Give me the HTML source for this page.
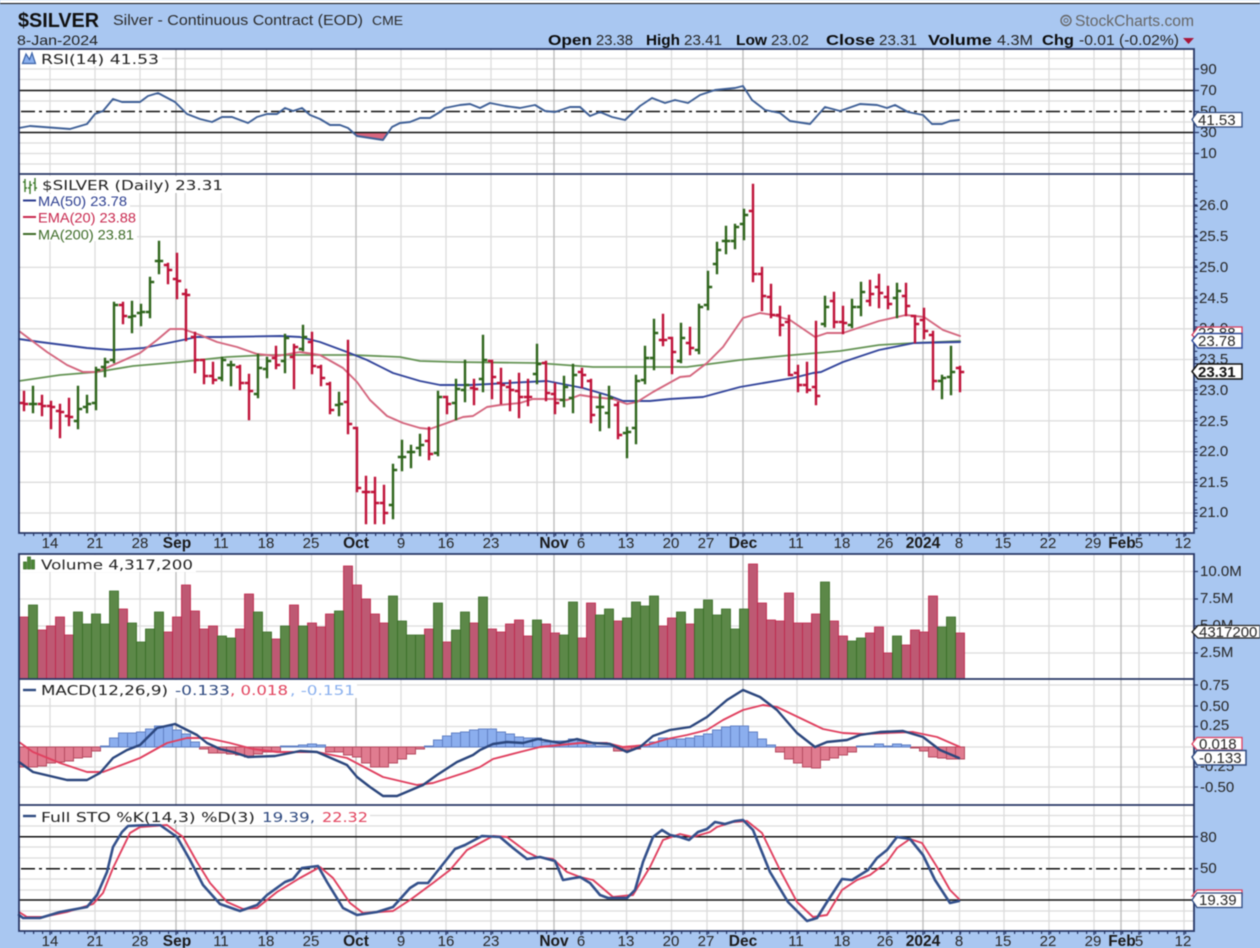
<!DOCTYPE html>
<html><head><meta charset="utf-8"><title>$SILVER</title>
<style>
html,body{margin:0;padding:0;background:#a9c7f1;width:1260px;height:948px;overflow:hidden}
svg{display:block;filter:blur(.4px)}
text{font-family:"Liberation Sans",Arial,sans-serif;fill:#222;font-size:14px}
.ax{font-size:15px;fill:#262626}
.dt{font-size:15px;text-anchor:middle;fill:#262626}
.mo{font-size:15.5px;font-weight:bold;text-anchor:middle;fill:#1a1a1a}
.b{font-weight:bold;font-size:15px;fill:#0c0c0c}
.v{font-size:15px;fill:#262626}
.l{font-family:"DejaVu Sans","Liberation Sans",sans-serif;font-size:13px}
.g{stroke:#dcdcdc;stroke-width:1.3;fill:none}
.gd{stroke:#bdbdbd;stroke-width:1.4;fill:none}
.f{fill:none;stroke-linejoin:round;stroke-linecap:round}
</style></head><body>
<svg xmlns="http://www.w3.org/2000/svg" width="1260" height="948" viewBox="0 0 1260 948">
<rect width="1260" height="948" fill="#a9c7f1"/>
<rect width="1260" height="3" fill="#fff"/><rect y="3" width="1260" height="1" fill="#111"/>
<!-- panels -->
<rect x="19" y="49" width="1175" height="484" fill="#fff"/>
<rect x="19" y="554" width="1175" height="377" fill="#fff"/>
<!-- horizontal grid -->
<path class="g" d="M19 58.5H1194M19 69H1194M19 79.5H1194M19 101H1194M19 122H1194M19 143H1194M19 153.5H1194M19 164H1194
M19 206H1194M19 236.7H1194M19 267.4H1194M19 298.1H1194M19 328.8H1194M19 359.5H1194M19 390.2H1194M19 420.9H1194M19 451.6H1194M19 482.3H1194M19 513H1194
M19 571.5H1194M19 599H1194M19 626H1194M19 653H1194
M19 685H1194M19 706H1194M19 726.5H1194M19 747H1194M19 767H1194M19 787H1194
M19 815.5H1194M19 826H1194M19 847H1194M19 858H1194M19 879H1194M19 890H1194M19 911H1194M19 921H1194"/>
<!-- vertical grid -->
<path class="g" d="M50 49V533M95 49V533M140 49V533M185 49V533M221.5 49V533M266.5 49V533M311.5 49V533M401 49V533M446 49V533M491 49V533M537 49V533M581 49V533M626.5 49V533M671.5 49V533M707 49V533M797 49V533M842 49V533M887 49V533M959.5 49V533M1004 49V533M1049 49V533M1094 49V533M1139 49V533M1184 49V533
M50 554V931M95 554V931M140 554V931M185 554V931M221.5 554V931M266.5 554V931M311.5 554V931M401 554V931M446 554V931M491 554V931M537 554V931M581 554V931M626.5 554V931M671.5 554V931M707 554V931M797 554V931M842 554V931M887 554V931M959.5 554V931M1004 554V931M1049 554V931M1094 554V931M1139 554V931M1184 554V931"/>
<path class="gd" d="M176 49V533M356 49V533M554 49V533M743 49V533M923 49V533M1121 49V533M176 554V931M356 554V931M554 554V931M743 554V931M923 554V931M1121 554V931"/>

<!-- RSI -->
<path d="M353 132.5L357 136L370 138L383 140L387 132.5Z" fill="#d9677f" stroke="none"/>
<path d="M19 90.5H1194M19 132.5H1194" stroke="#111" stroke-width="1.5" fill="none"/>
<path d="M21 111.5H1194" stroke="#111" stroke-width="1.5" stroke-dasharray="14 4 3 4" fill="none"/>
<polyline class="f" stroke="#3f6097" stroke-width="1.9" points="19,128 30,126 70,129 87,124 95,114 103,111 113,99 122,102 140,102 148,96 158,93 175,102 187,114 200,119 212,122 222,117 232,117 248,123 257,117 267,114 277,114 285,108 293,111 302,108 310,115 320,119 330,125 340,125 348,128 357,136 370,138 383,140 392,127 400,123 410,122 420,118 430,118 440,112 445,108 460,105 470,104 480,108 490,103 505,106 520,108 535,105 545,111 555,112 570,107 580,107 590,116 600,112 612,117 625,120 640,106 652,98 665,103 675,100 688,103 700,95 715,90 735,88 743,86 752,100 765,110 780,113 790,121 810,124 825,107 840,111 860,104 877,105 887,108 895,105 908,112 923,115 932,124 942,124 950,121 959,120"/>

<!-- price MAs -->
<polyline class="f" stroke="#659455" stroke-width="1.8" points="19,381 60,375 97,372 133,366 180,362 227,357 267,355 353,355 400,357 420,361 453,362 537,363 593,367 647,367 687,367 740,360 793,355 840,351 879,345 914,343 960,341"/>
<polyline class="f" stroke="#34469c" stroke-width="1.9" points="19,339 40,342 87,348 113,350 143,348 173,342 197,337 220,337 280,336 300,337 320,342 347,352 367,360 393,373 420,381 440,385 470,385 547,381 583,388 607,395 623,401 650,401 670,399 703,397 740,387 793,378 813,373 821,372 843,362 879,350 914,343 960,342"/>
<polyline class="f" stroke="#d4667e" stroke-width="1.9" points="19,331 47,352 67,365 83,372 97,372 113,365 140,353 157,340 170,329 183,329 200,335 217,342 237,347 257,354 277,356 300,352 320,355 343,368 357,382 370,400 387,416 403,423 420,428 430,429 447,423 463,417 473,416 487,407 500,405 520,403 533,399 553,399 567,400 580,395 593,397 613,399 627,404 637,402 653,392 680,377 690,376 707,363 723,347 743,318 760,313 773,315 790,320 815,337 827,333 843,333 879,321 906,315 924,317 943,330 960,336"/>
<!-- OHLC red -->
<path fill="none" stroke="#bf1239" stroke-width="2.4" stroke-linecap="square" d="M24 392V410M21 403H24M24 404H27M42 396V415M39 404H42M42 406H45M51 402V428M48 406H51M51 407H54M60 405V437M57 411H60M60 412H63M69 399V425M66 416H69M69 417H72M123 303V323M120 305H123M123 316H126M168 264V283M165 265H168M168 270H171M177 254V298M174 279H177M177 281H180M186 290V340M183 294H186M186 295H189M195 333V372M192 337H195M195 360H198M204 360V383M201 360H204M204 376H207M213 363V383M210 376H213M213 380H216M240 366V389M237 367H240M240 383H243M249 375V419M246 383H249M249 391H252M276 347V368M273 358H276M276 365H279M294 345V388M291 357H294M294 347H297M312 333V373M309 342H312M312 366H315M321 366V385M318 367H321M321 378H324M330 383V413M327 384H330M330 410H333M348 341V433M345 402H348M348 424H351M357 428V491M354 428H357M357 488H360M366 477V523M363 492H369M375 478V523M372 492H375M375 503H378M384 486V523M381 503H384M384 513H387M429 428V459M426 441H429M429 454H432M447 397V413M444 397H447M447 404H450M474 380V404M471 388H474M474 389H477M492 361V398M489 361H492M492 377H495M501 369V403M498 383H501M501 385H504M510 381V410M507 387H510M510 390H513M519 374V417M516 391H519M519 397H522M528 380V405M525 397H531M546 362V400M543 363H546M546 393H549M555 384V413M552 394H555M555 403H558M582 369V387M579 372H582M582 375H585M591 380V422M588 381H591M591 415H594M618 403V438M615 405H618M618 435H621M663 315V345M660 340H666M672 338V373M669 338H672M672 352H675M690 328V354M687 343H690M690 348H693M753 185V281M750 211H753M753 274H756M762 268V310M759 274H762M762 296H765M771 285V317M768 297H771M771 315H774M780 307V335M777 315H780M780 325H783M789 316V375M786 322H789M789 375H792M798 366V391M795 373H798M798 385H801M807 363V392M804 385H807M807 390H810M816 322V404M813 387H816M816 396H819M834 293V327M831 301H834M834 322H837M843 307V333M840 322H843M843 323H846M870 281V305M867 301H870M870 294H873M879 275V307M876 287H879M879 293H882M888 287V308M885 297H888M888 304H891M906 284V315M903 296H906M906 306H909M915 316V342M912 316H915M915 324H918M924 309V338M921 320H924M924 331H927M933 332V389M930 335H933M933 381H936M960 367V391M957 368H960M960 372H963"/>
<!-- OHLC green -->
<path fill="none" stroke="#2f651c" stroke-width="2.4" stroke-linecap="square" d="M33 387V412M30 404H36M78 387V428M75 421H78M78 409H81M87 396V412M84 407H87M87 404H90M96 368V409M93 403H96M96 370H99M105 359V376M102 367H105M105 362H108M114 303V362M111 360H114M114 305H117M132 302V332M129 317H132M132 316H135M141 305V325M138 313H141M141 312H144M150 278V317M147 312H150M150 282H153M159 242V273M156 261H162M222 358V380M219 378H222M222 360H225M231 362V385M228 365H234M258 355V397M255 394H258M258 368H261M267 358V377M264 369H267M267 361H270M285 335V372M282 361H285M285 338H288M303 326V350M300 349H303M303 337H306M339 393V415M336 405H339M339 404H342M393 465V518M390 505H393M393 470H396M402 441V470M399 457H405M411 446V467M408 452H414M420 435V455M417 448H420M420 445H423M438 392V455M435 453H438M438 397H441M456 380V419M453 403H456M456 389H459M465 361V401M462 390H465M465 385H468M483 336V391M480 379H483M483 360H486M537 345V383M534 374H537M537 364H540M564 377V406M561 400H564M564 387H567M573 365V412M570 398H573M573 375H576M600 395V430M597 407H603M609 387V427M606 413H609M609 398H612M627 428V457M624 433H627M627 432H630M636 376V443M633 428H636M636 381H639M645 347V383M642 380H645M645 358H648M654 320V369M651 358H654M654 333H657M681 324V362M678 361H681M681 338H684M699 305V353M696 350H699M699 307H702M708 272V309M705 305H708M708 287H711M717 243V273M714 264H717M717 250H720M726 227V253M723 241H729M735 225V248M732 241H735M735 227H738M744 210V239M741 224H744M744 215H747M825 297V326M822 324H825M825 307H828M852 300V327M849 325H852M852 307H855M861 283V315M858 307H861M861 292H864M897 284V317M894 298H897M897 291H900M942 376V398M939 381H942M942 378H945M951 347V394M948 377H951M951 372H954"/>

<!-- Volume -->
<path fill="#bd5670" fill-opacity=".98" stroke="#bf1f45" stroke-width=".8" d="M19.5 617h9V679h-9zM37.5 630h9V679h-9zM46.5 626h9V679h-9zM55.5 617h9V679h-9zM64.5 635h9V679h-9zM118.5 609h9V679h-9zM163.5 632h9V679h-9zM172.5 617h9V679h-9zM181.5 585h9V679h-9zM190.5 611h9V679h-9zM199.5 629h9V679h-9zM208.5 626h9V679h-9zM235.5 629h9V679h-9zM244.5 594h9V679h-9zM271.5 639h9V679h-9zM289.5 605h9V679h-9zM307.5 623h9V679h-9zM316.5 627h9V679h-9zM325.5 614h9V679h-9zM343.5 566h9V679h-9zM352.5 585h9V679h-9zM361.5 599h9V679h-9zM370.5 614h9V679h-9zM379.5 623h9V679h-9zM424.5 629h9V679h-9zM442.5 642h9V679h-9zM469.5 623h9V679h-9zM487.5 629h9V679h-9zM496.5 632h9V679h-9zM505.5 624h9V679h-9zM514.5 620h9V679h-9zM523.5 636h9V679h-9zM541.5 624h9V679h-9zM550.5 633h9V679h-9zM577.5 638h9V679h-9zM586.5 603h9V679h-9zM613.5 621h9V679h-9zM658.5 626h9V679h-9zM667.5 618h9V679h-9zM685.5 624h9V679h-9zM748.5 564h9V679h-9zM757.5 603h9V679h-9zM766.5 620h9V679h-9zM775.5 621h9V679h-9zM784.5 593h9V679h-9zM793.5 623h9V679h-9zM802.5 623h9V679h-9zM811.5 614h9V679h-9zM829.5 621h9V679h-9zM838.5 636h9V679h-9zM865.5 633h9V679h-9zM874.5 627h9V679h-9zM883.5 653h9V679h-9zM901.5 645h9V679h-9zM910.5 630h9V679h-9zM919.5 632h9V679h-9zM928.5 596h9V679h-9zM955.5 633h9V679h-9z"/>
<path fill="#5c8848" stroke="#356a22" stroke-width=".8" d="M28.5 605h9V679h-9zM73.5 612h9V679h-9zM82.5 624h9V679h-9zM91.5 614h9V679h-9zM100.5 624h9V679h-9zM109.5 591h9V679h-9zM127.5 623h9V679h-9zM136.5 642h9V679h-9zM145.5 629h9V679h-9zM154.5 612h9V679h-9zM217.5 636h9V679h-9zM226.5 638h9V679h-9zM253.5 612h9V679h-9zM262.5 632h9V679h-9zM280.5 626h9V679h-9zM298.5 626h9V679h-9zM334.5 611h9V679h-9zM388.5 596h9V679h-9zM397.5 621h9V679h-9zM406.5 635h9V679h-9zM415.5 635h9V679h-9zM433.5 603h9V679h-9zM451.5 630h9V679h-9zM460.5 612h9V679h-9zM478.5 597h9V679h-9zM532.5 620h9V679h-9zM559.5 635h9V679h-9zM568.5 602h9V679h-9zM595.5 615h9V679h-9zM604.5 609h9V679h-9zM622.5 618h9V679h-9zM631.5 602h9V679h-9zM640.5 606h9V679h-9zM649.5 596h9V679h-9zM676.5 612h9V679h-9zM694.5 609h9V679h-9zM703.5 600h9V679h-9zM712.5 615h9V679h-9zM721.5 609h9V679h-9zM730.5 629h9V679h-9zM739.5 609h9V679h-9zM820.5 582h9V679h-9zM847.5 641h9V679h-9zM856.5 638h9V679h-9zM892.5 636h9V679h-9zM937.5 627h9V679h-9zM946.5 617h9V679h-9z"/>

<!-- MACD histogram -->
<path fill="#e07c90" stroke="#b54a60" stroke-width="1" d="M19.5 747h9V767h-9zM28.5 747h9V767h-9zM37.5 747h9V766h-9zM46.5 747h9V763h-9zM55.5 747h9V762h-9zM64.5 747h9V761h-9zM73.5 747h9V758h-9zM82.5 747h9V757h-9zM91.5 747h9V751h-9zM199.5 747h9V749h-9zM208.5 747h9V753h-9zM217.5 747h9V753h-9zM226.5 747h9V754h-9zM235.5 747h9V755h-9zM244.5 747h9V757h-9zM253.5 747h9V754h-9zM262.5 747h9V752h-9zM271.5 747h9V752h-9zM325.5 747h9V752h-9zM334.5 747h9V752h-9zM343.5 747h9V755h-9zM352.5 747h9V757h-9zM361.5 747h9V763h-9zM370.5 747h9V767h-9zM379.5 747h9V767h-9zM388.5 747h9V763h-9zM397.5 747h9V759h-9zM406.5 747h9V754h-9zM415.5 747h9V749h-9zM613.5 747h9V751h-9zM622.5 747h9V750h-9zM631.5 747h9V749h-9zM775.5 747h9V752h-9zM784.5 747h9V759h-9zM793.5 747h9V763h-9zM802.5 747h9V767h-9zM811.5 747h9V768h-9zM820.5 747h9V760h-9zM829.5 747h9V758h-9zM838.5 747h9V755h-9zM847.5 747h9V752h-9zM910.5 747h9V748h-9zM919.5 747h9V751h-9zM928.5 747h9V757h-9zM937.5 747h9V758h-9zM946.5 747h9V759h-9zM955.5 747h9V759h-9z"/>
<path fill="#8baeee" stroke="#6080c4" stroke-width="1" d="M100.5 746h9V747h-9zM109.5 738h9V747h-9zM118.5 733h9V747h-9zM127.5 733h9V747h-9zM136.5 732h9V747h-9zM145.5 729h9V747h-9zM154.5 726h9V747h-9zM163.5 726h9V747h-9zM172.5 730h9V747h-9zM181.5 734h9V747h-9zM190.5 742h9V747h-9zM280.5 746h9V747h-9zM289.5 746h9V747h-9zM298.5 745h9V747h-9zM307.5 744h9V747h-9zM316.5 745h9V747h-9zM424.5 746h9V747h-9zM433.5 740h9V747h-9zM442.5 736h9V747h-9zM451.5 733h9V747h-9zM460.5 732h9V747h-9zM469.5 730h9V747h-9zM478.5 729h9V747h-9zM487.5 729h9V747h-9zM496.5 732h9V747h-9zM505.5 734h9V747h-9zM514.5 737h9V747h-9zM523.5 738h9V747h-9zM532.5 738h9V747h-9zM541.5 742h9V747h-9zM550.5 741h9V747h-9zM559.5 741h9V747h-9zM568.5 739h9V747h-9zM577.5 741h9V747h-9zM586.5 745h9V747h-9zM595.5 746h9V747h-9zM604.5 746h9V747h-9zM640.5 745h9V747h-9zM649.5 742h9V747h-9zM658.5 738h9V747h-9zM667.5 739h9V747h-9zM676.5 739h9V747h-9zM685.5 738h9V747h-9zM694.5 736h9V747h-9zM703.5 734h9V747h-9zM712.5 730h9V747h-9zM721.5 727h9V747h-9zM730.5 726h9V747h-9zM739.5 726h9V747h-9zM748.5 732h9V747h-9zM757.5 739h9V747h-9zM766.5 745h9V747h-9zM856.5 746h9V747h-9zM865.5 746h9V747h-9zM874.5 744h9V747h-9zM883.5 746h9V747h-9zM892.5 744h9V747h-9zM901.5 745h9V747h-9z"/>
<polyline class="f" stroke="#e0405f" stroke-width="1.9" points="19,742 33,752 60,763 87,772 103,772 140,758 167,743 187,738 207,738 230,743 253,749 277,752 317,752 347,758 383,777 417,785 433,783 467,772 480,767 493,759 520,752 540,747 560,745 580,743 607,743 623,747 647,745 667,739 687,735 707,730 723,720 743,710 763,705 777,707 800,718 823,729 843,733 863,734 887,733 913,732 937,737 960,747"/>
<polyline class="f" stroke="#2b467d" stroke-width="2.4" points="19,762 33,772 67,780 87,780 100,773 113,758 127,750 140,745 157,728 175,724 197,735 207,743 220,749 233,752 248,757 275,756 300,751 317,752 347,765 357,777 370,787 383,796 397,796 423,785 437,775 457,762 473,755 480,750 493,744 507,742 523,743 538,739 560,743 577,739 593,743 610,744 627,752 640,747 653,736 670,730 690,727 707,717 727,700 743,690 760,697 777,710 797,733 815,747 827,742 847,740 860,735 880,732 903,731 923,737 940,750 959,758"/>

<!-- STO -->
<path d="M19 836.7H1194M19 900H1194" stroke="#111" stroke-width="1.5" fill="none"/>
<path d="M21 868.7H1194" stroke="#111" stroke-width="1.5" stroke-dasharray="14 4 3 4" fill="none"/>
<polyline class="f" stroke="#e0405f" stroke-width="1.9" points="19,912 27,917 43,917 67,912 93,904 103,893 113,868 130,833 140,827 167,825 183,837 197,862 210,883 227,902 243,909 257,908 277,892 300,878 320,867 333,878 350,903 363,913 393,911 410,900 433,883 450,870 467,850 480,843 493,836 507,837 527,852 537,857 553,859 567,872 580,877 593,880 613,897 633,895 650,867 663,840 680,834 693,837 710,832 717,827 733,822 747,821 762,833 780,870 797,902 813,917 827,915 842,890 857,880 870,875 887,862 897,848 910,839 922,843 937,867 950,890 959,899"/>
<polyline class="f" stroke="#33508b" stroke-width="2.6" points="19,915 23,918 40,918 60,912 87,907 97,895 107,872 113,847 122,832 128,826 147,825 160,825 177,837 190,860 203,885 220,904 240,911 257,905 267,895 285,882 293,879 302,868 318,866 327,882 343,908 357,915 377,912 393,907 410,888 418,883 428,883 455,849 465,845 482,836 500,837 513,848 527,859 540,857 555,861 563,880 580,877 590,883 600,895 608,898 627,898 635,890 643,862 653,837 662,830 670,835 680,837 689,840 698,832 707,829 715,822 725,824 735,821 743,820 753,830 770,872 788,902 807,921 817,918 827,902 842,879 852,880 868,870 877,858 887,850 897,837 910,839 923,855 935,880 950,903 959,901"/>

<!-- frame lines -->
<path d="M19 49V533H1194V49H19ZM19 174H1194M19 554V931H1194V554H19ZM19 679H1194M19 805H1194" fill="none" stroke="#283766" stroke-width="1.8"/>
<!-- ticks -->
<path d="M24 534.5H1190" stroke="#283766" stroke-width="3" stroke-dasharray="1.2 7.8" fill="none"/>
<path d="M24 932.5H1190" stroke="#283766" stroke-width="3" stroke-dasharray="1.2 7.8" fill="none"/>
<path d="M50 533v4M95 533v4M140 533v4M176 533v4M221.5 533v4M266.5 533v4M311.5 533v4M356 533v4M401 533v4M446 533v4M491 533v4M554 533v4M581 533v4M626.5 533v4M671.5 533v4M707 533v4M743 533v4M797 533v4M842 533v4M887 533v4M923 533v4M960 533v4M1004 533v4M1049 533v4M1094 533v4M1121 533v4M1139 533v4M1184 533v4
M50 931v4M95 931v4M140 931v4M176 931v4M221.5 931v4M266.5 931v4M311.5 931v4M356 931v4M401 931v4M446 931v4M491 931v4M554 931v4M581 931v4M626.5 931v4M671.5 931v4M707 931v4M743 931v4M797 931v4M842 931v4M887 931v4M923 931v4M960 931v4M1004 931v4M1049 931v4M1094 931v4M1121 931v4M1139 931v4M1184 931v4" stroke="#283766" stroke-width="1.3" fill="none"/>
<path d="M1196 180V533" stroke="#283766" stroke-width="2.5" stroke-dasharray="1.2 4.9" fill="none"/>
<path d="M1194 69h5M1194 90.5h5M1194 111.5h5M1194 132.5h5M1194 153.5h5M1194 206h4M1194 236.7h4M1194 267.4h4M1194 298.1h4M1194 328.8h4M1194 359.5h4M1194 390.2h4M1194 420.9h4M1194 451.6h4M1194 482.3h4M1194 513h4M1194 571.5h4M1194 599h4M1194 626h4M1194 653h4M1194 685h4M1194 706h4M1194 726.5h4M1194 767h4M1194 787h4M1194 836.7h4M1194 868.7h4" stroke="#283766" stroke-width="1.3" fill="none"/>

<!-- header -->
<text x="18" y="27" style="font-size:20px;font-weight:bold;fill:#111" textLength="81" lengthAdjust="spacingAndGlyphs">$SILVER</text>
<text x="113" y="25" style="font-size:15px;fill:#2b2b2b" textLength="250" lengthAdjust="spacingAndGlyphs">Silver - Continuous Contract (EOD)</text>
<text x="372" y="25" style="font-size:13px;fill:#2b2b2b" textLength="31" lengthAdjust="spacingAndGlyphs">CME</text>
<text x="17" y="45" style="font-size:14px;fill:#222" textLength="81" lengthAdjust="spacingAndGlyphs">8-Jan-2024</text>
<circle cx="1066" cy="20.5" r="5" fill="none" stroke="#666" stroke-width="1.4"/><circle cx="1066" cy="20.5" r="2" fill="none" stroke="#666" stroke-width="1"/>
<text x="1075" y="26" style="font-size:15.5px;fill:#666" textLength="119" lengthAdjust="spacingAndGlyphs">StockCharts.com</text>
<text x="548" y="45" class="b" textLength="44" lengthAdjust="spacingAndGlyphs">Open</text><text x="596" y="45" class="v" textLength="37" lengthAdjust="spacingAndGlyphs">23.38</text>
<text x="646" y="45" class="b" textLength="34" lengthAdjust="spacingAndGlyphs">High</text><text x="684" y="45" class="v" textLength="38" lengthAdjust="spacingAndGlyphs">23.41</text>
<text x="736" y="45" class="b" textLength="31" lengthAdjust="spacingAndGlyphs">Low</text><text x="771" y="45" class="v" textLength="38" lengthAdjust="spacingAndGlyphs">23.02</text>
<text x="826" y="45" class="b" textLength="49" lengthAdjust="spacingAndGlyphs">Close</text><text x="879" y="45" class="v" textLength="38" lengthAdjust="spacingAndGlyphs">23.31</text>
<text x="928" y="45" class="b" textLength="64" lengthAdjust="spacingAndGlyphs">Volume</text><text x="997" y="45" class="v" textLength="36" lengthAdjust="spacingAndGlyphs">4.3M</text>
<text x="1042" y="45" class="b" textLength="32" lengthAdjust="spacingAndGlyphs">Chg</text><text x="1079" y="45" class="v" textLength="100" lengthAdjust="spacingAndGlyphs">-0.01 (-0.02%)</text>
<path d="M1183 38H1194L1188.5 44Z" fill="#a8173a"/>

<!-- RSI label -->
<rect x="20" y="50" width="142" height="16" fill="#fff"/>
<path d="M22.5 63.5L26 54L29.5 59.5L32 53L35.5 63.5Z" fill="#8ab0ee" stroke="#3a62a8" stroke-width="1.2"/>
<text x="41" y="64" class="l" textLength="118" lengthAdjust="spacingAndGlyphs">RSI(14) 41.53</text>
<!-- price labels -->
<rect x="20" y="176" width="206" height="17" fill="#fff"/>
<rect x="20" y="194" width="110" height="16" fill="#fff"/>
<rect x="20" y="210" width="119" height="16" fill="#fff"/>
<rect x="20" y="226" width="117" height="15" fill="#fff"/>
<path d="M25 179V192M23 182H25M25 188H27M30 181V194M28 188H30M30 185H32M35 178V191M33 183H35M35 188H37" stroke="#3c7a2a" stroke-width="1.4" fill="none"/>
<text x="42" y="190" class="l" textLength="181" lengthAdjust="spacingAndGlyphs">$SILVER (Daily) 23.31</text>
<path d="M23 200.5H36" stroke="#2c3e90" stroke-width="2"/><text x="38" y="206" style="font-size:14px;fill:#2c3e90" textLength="89" lengthAdjust="spacingAndGlyphs">MA(50) 23.78</text>
<path d="M23 217H36" stroke="#c8284e" stroke-width="2"/><text x="38" y="222.5" style="font-size:14px;fill:#c8284e" textLength="98" lengthAdjust="spacingAndGlyphs">EMA(20) 23.88</text>
<path d="M23 234H36" stroke="#3d6b27" stroke-width="2"/><text x="38" y="239.5" style="font-size:14px;fill:#3d6b27" textLength="96" lengthAdjust="spacingAndGlyphs">MA(200) 23.81</text>
<!-- volume label -->
<rect x="20" y="555" width="176" height="17" fill="#fff"/>
<path d="M23.5 562v7h3v-7zM27.5 557v12h3v-12zM31.5 560v9h3v-9z" fill="#4f8a3a" stroke="#356a22" stroke-width=".7"/>
<text x="41" y="569.5" class="l" textLength="152" lengthAdjust="spacingAndGlyphs">Volume 4,317,200</text>
<!-- macd label -->
<rect x="20" y="680" width="337" height="18" fill="#fff"/>
<path d="M23 690H36" stroke="#2f4a80" stroke-width="2.4"/>
<text x="41" y="695" class="l" textLength="127" lengthAdjust="spacingAndGlyphs">MACD(12,26,9)</text>
<text x="175" y="695" class="l" style="fill:#2f4a80" textLength="55" lengthAdjust="spacingAndGlyphs">-0.133</text>
<text x="230" y="695" class="l" style="fill:#e2455f" textLength="58" lengthAdjust="spacingAndGlyphs">, 0.018</text>
<text x="290" y="695" class="l" style="fill:#8ab0ee" textLength="65" lengthAdjust="spacingAndGlyphs">, -0.151</text>
<!-- sto label -->
<rect x="20" y="806" width="350" height="18" fill="#fff"/>
<path d="M23 816H36" stroke="#2f4a80" stroke-width="2.4"/>
<text x="41" y="822" class="l" textLength="214" lengthAdjust="spacingAndGlyphs">Full STO %K(14,3) %D(3)</text>
<text x="262" y="822" class="l" style="fill:#2f4a80" textLength="53" lengthAdjust="spacingAndGlyphs">19.39,</text>
<text x="322" y="822" class="l" style="fill:#e2455f" textLength="46" lengthAdjust="spacingAndGlyphs">22.32</text>

<!-- date axes -->
<g>
<text class="dt" x="50" y="548">14</text><text class="dt" x="95" y="548">21</text><text class="dt" x="140" y="548">28</text><text class="mo" x="177" y="548">Sep</text><text class="dt" x="221" y="548">11</text><text class="dt" x="266" y="548">18</text><text class="dt" x="311" y="548">25</text><text class="mo" x="356" y="548">Oct</text><text class="dt" x="401" y="548">9</text><text class="dt" x="446" y="548">16</text><text class="dt" x="491" y="548">23</text><text class="mo" x="554" y="548">Nov</text><text class="dt" x="581" y="548">6</text><text class="dt" x="626" y="548">13</text><text class="dt" x="671" y="548">20</text><text class="dt" x="706" y="548">27</text><text class="mo" x="743" y="548">Dec</text><text class="dt" x="796" y="548">11</text><text class="dt" x="842" y="548">18</text><text class="dt" x="885" y="548">26</text><text class="mo" x="923" y="548">2024</text><text class="dt" x="959" y="548">8</text><text class="dt" x="1003" y="548">15</text><text class="dt" x="1048" y="548">22</text><text class="dt" x="1093" y="548">29</text><text class="mo" x="1122" y="548">Feb</text><text class="dt" x="1139" y="548">5</text><text class="dt" x="1183" y="548">12</text>
</g>
<g>
<text class="dt" x="50" y="946">14</text><text class="dt" x="95" y="946">21</text><text class="dt" x="140" y="946">28</text><text class="mo" x="177" y="946">Sep</text><text class="dt" x="221" y="946">11</text><text class="dt" x="266" y="946">18</text><text class="dt" x="311" y="946">25</text><text class="mo" x="356" y="946">Oct</text><text class="dt" x="401" y="946">9</text><text class="dt" x="446" y="946">16</text><text class="dt" x="491" y="946">23</text><text class="mo" x="554" y="946">Nov</text><text class="dt" x="581" y="946">6</text><text class="dt" x="626" y="946">13</text><text class="dt" x="671" y="946">20</text><text class="dt" x="706" y="946">27</text><text class="mo" x="743" y="946">Dec</text><text class="dt" x="796" y="946">11</text><text class="dt" x="842" y="946">18</text><text class="dt" x="885" y="946">26</text><text class="mo" x="923" y="946">2024</text><text class="dt" x="959" y="946">8</text><text class="dt" x="1003" y="946">15</text><text class="dt" x="1048" y="946">22</text><text class="dt" x="1093" y="946">29</text><text class="mo" x="1122" y="946">Feb</text><text class="dt" x="1139" y="946">5</text><text class="dt" x="1183" y="946">12</text>
</g>

<!-- right axis -->
<text class="ax" x="1200" y="74">90</text><text class="ax" x="1200" y="95">70</text><text class="ax" x="1200" y="116">50</text><text class="ax" x="1200" y="137">30</text><text class="ax" x="1200" y="158">10</text>
<text class="ax" x="1199" y="210">26.0</text><text class="ax" x="1199" y="241">25.5</text><text class="ax" x="1199" y="272">25.0</text><text class="ax" x="1199" y="303">24.5</text><text class="ax" x="1199" y="333">24.0</text><text class="ax" x="1199" y="364">23.5</text><text class="ax" x="1199" y="395">23.0</text><text class="ax" x="1199" y="426">22.5</text><text class="ax" x="1199" y="456">22.0</text><text class="ax" x="1199" y="487">21.5</text><text class="ax" x="1199" y="517">21.0</text>
<text class="ax" x="1200" y="576">10.0M</text><text class="ax" x="1200" y="603">7.5M</text><text class="ax" x="1200" y="630">5.0M</text><text class="ax" x="1200" y="657">2.5M</text>
<text class="ax" x="1200" y="690">0.75</text><text class="ax" x="1200" y="711">0.50</text><text class="ax" x="1200" y="730">0.25</text><text class="ax" x="1200" y="771">-0.25</text><text class="ax" x="1200" y="792">-0.50</text>
<text class="ax" x="1200" y="842">80</text><text class="ax" x="1200" y="873">50</text>

<!-- value tags -->
<path d="M1192 119.5L1197 112.5H1242V127H1197Z" fill="#fff" stroke="#2f4a80" stroke-width="1.3"/>
<text class="ax" x="1198" y="125">41.53</text>
<path d="M1192 335L1198 327H1242V340H1198Z" fill="#fff" stroke="#d6395a" stroke-width="1.3"/>
<text class="ax" x="1198" y="338">23.88</text>
<path d="M1192 340.5L1198 333.5H1242V348H1198Z" fill="#fff" stroke="#2f4a9a" stroke-width="1.4"/>
<text class="ax" x="1198" y="346">23.78</text>
<path d="M1192 371.5L1198 364H1242V379H1198Z" fill="#fff" stroke="#111" stroke-width="1.5"/>
<text x="1198" y="377" style="font-size:15px;font-weight:bold;fill:#111">23.31</text>
<path d="M1192 632L1198 625.5H1260V638H1198Z" fill="#fff" stroke="#222" stroke-width="1.3"/>
<text class="ax" x="1199" y="637">4317200</text>
<path d="M1192 744L1197 737.5H1242V750H1197Z" fill="#fff" stroke="#e0405f" stroke-width="1.3"/>
<text class="ax" x="1199" y="749">0.018</text>
<path d="M1192 757L1197 750.5H1246V765H1197Z" fill="#fff" stroke="#2f4a80" stroke-width="1.5"/>
<text class="ax" x="1199" y="763">-0.133</text>
<path d="M1192 896L1197 890H1242V896H1197Z" fill="#fff" stroke="#e0405f" stroke-width="1.3"/>
<path d="M1192 900L1197 893H1242V907.5H1197Z" fill="#fff" stroke="#2f4a80" stroke-width="1.3"/>
<text class="ax" x="1199" y="905">19.39</text>
</svg>
</body></html>
